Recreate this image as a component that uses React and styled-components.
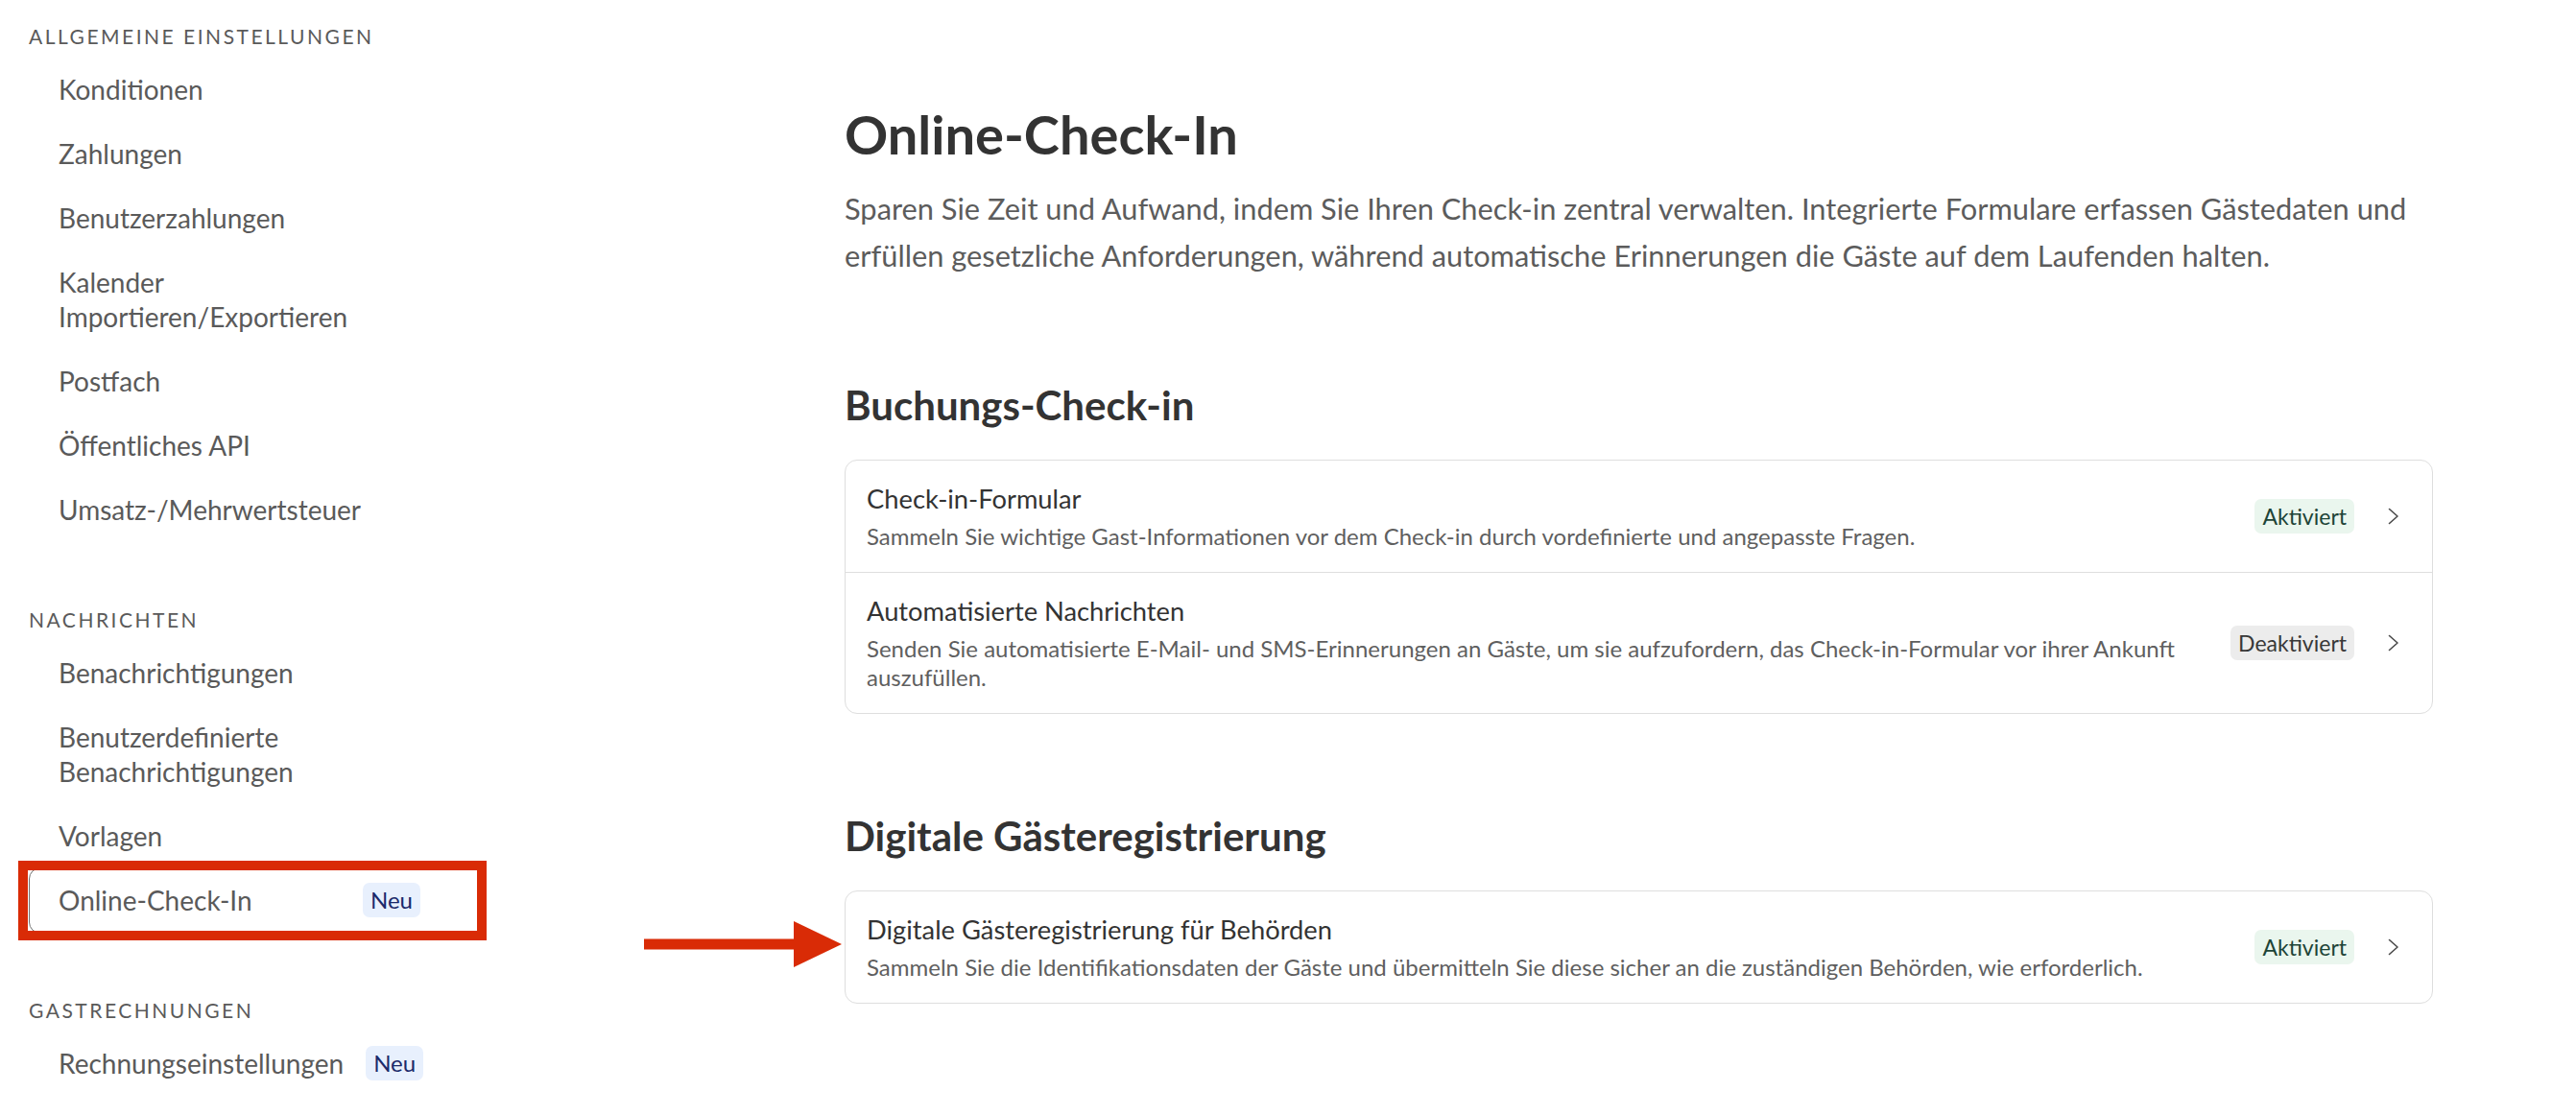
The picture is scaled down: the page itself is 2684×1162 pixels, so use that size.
import styled, { createGlobalStyle } from 'styled-components';

const GlobalStyle = createGlobalStyle`
  html, body {
    margin: 0;
    padding: 0;
    background: #ffffff;
  }
  body {
    font-family: Lato, "Liberation Sans", sans-serif;
    color: #333333;
  }
`;

const Page = styled.div`
  display: grid;
  grid-template-columns: 503px 1655px;
  column-gap: 377px;
  min-height: 1162px;
`;

const Sidebar = styled.nav`
  display: flex;
  flex-direction: column;
  gap: 63px;
  padding: 20px 0 0 30px;
`;

const Section = styled.div`
  display: flex;
  flex-direction: column;
`;

const SectionTitle = styled.div`
  font-size: 21px;
  line-height: 36px;
  height: 36px;
  letter-spacing: 2.5px;
  text-transform: uppercase;
  color: #5a5a5a;
  margin-bottom: 4px;
  white-space: nowrap;
`;

const NavItem = styled.div`
  position: relative;
  display: flex;
  align-items: flex-start;
  gap: 23px;
  padding: 15px 0 16px 30px;
  font-size: 28px;
  line-height: 36px;
  color: #5a5a5a;
  border: 1px solid ${p => (p.$active ? '#6e6e6e' : 'transparent')};
  border-radius: 12px;
  margin: -1px 0;
`;

const NavLabel = styled.span`
  min-width: ${p => (p.$badge ? '294px' : '0')};
`;

const NewBadge = styled.span`
  display: inline-block;
  height: 36px;
  line-height: 36px;
  padding: 0 8px;
  font-size: 24px;
  color: #1b2a6b;
  background: #e8f0fd;
  border-radius: 7px;
`;

const Highlight = styled.span`
  position: absolute;
  top: -8px;
  bottom: -8px;
  left: -12px;
  right: -5px;
  border: 10px solid #d92b06;
  pointer-events: none;
`;

const Main = styled.main`
  display: flex;
  flex-direction: column;
  padding-top: 106px;
`;

const PageTitle = styled.h1`
  margin: 0;
  font-size: 56px;
  line-height: 68px;
  font-weight: 700;
  color: #333333;
`;

const Lead = styled.p`
  margin: 19px 0 0;
  font-size: 30.8px;
  line-height: 49px;
  color: #5c5c5c;
`;

const GroupTitle = styled.h2`
  margin: 103px 0 0;
  font-size: 42px;
  line-height: 48px;
  font-weight: 700;
  color: #333333;
  &:first-of-type {
    margin-top: 107px;
  }
`;

const Card = styled.div`
  position: relative;
  margin-top: 33px;
  border: 1px solid #dedede;
  border-radius: 13px;
  background: #ffffff;
`;

const Row = styled.div`
  display: flex;
  align-items: center;
  gap: 26px;
  padding: 22px 34px 22px 22px;
  & + & {
    border-top: 1px solid #dedede;
  }
`;

const RowText = styled.div`
  flex: 1;
  display: flex;
  flex-direction: column;
  gap: 6px;
`;

const RowTitle = styled.div`
  font-size: 27.3px;
  line-height: 36px;
  color: #333333;
`;

const RowDesc = styled.div`
  font-size: 24px;
  line-height: 30px;
  color: #5f5f5f;
`;

const RowEnd = styled.div`
  display: flex;
  align-items: center;
  gap: 35px;
`;

const Status = styled.span`
  display: inline-block;
  height: 36px;
  line-height: 36px;
  padding: 0 8px;
  font-size: 23px;
  border-radius: 7px;
  color: ${p => (p.$on ? '#1d4437' : '#383838')};
  background: ${p => (p.$on ? '#eaf6ee' : '#ececec')};
`;

const Pointer = styled.svg`
  position: absolute;
  right: calc(100% + 4px);
  top: 50%;
  transform: translateY(calc(-50% - 3px));
`;

function Chevron() {
  return (
    <svg width="12" height="18" viewBox="0 0 12 18" fill="none">
      <polyline points="1.5,1.5 10,9 1.5,16.5" stroke="#4a4a4a" strokeWidth="1.6" strokeLinecap="round" strokeLinejoin="round" />
    </svg>
  );
}

const sections = [
  {
    title: 'Allgemeine Einstellungen',
    items: [
      { label: 'Konditionen' },
      { label: 'Zahlungen' },
      { label: 'Benutzerzahlungen' },
      { label: ['Kalender', 'Importieren/Exportieren'] },
      { label: 'Postfach' },
      { label: 'Öffentliches API' },
      { label: 'Umsatz-/Mehrwertsteuer' },
    ],
  },
  {
    title: 'Nachrichten',
    items: [
      { label: 'Benachrichtigungen' },
      { label: ['Benutzerdefinierte', 'Benachrichtigungen'] },
      { label: 'Vorlagen' },
      { label: 'Online-Check-In', badge: 'Neu', active: true },
    ],
  },
  {
    title: 'Gastrechnungen',
    items: [{ label: 'Rechnungseinstellungen', badge: 'Neu' }],
  },
];

const bookingRows = [
  {
    title: 'Check-in-Formular',
    desc: 'Sammeln Sie wichtige Gast-Informationen vor dem Check-in durch vordefinierte und angepasste Fragen.',
    on: true,
  },
  {
    title: 'Automatisierte Nachrichten',
    desc: 'Senden Sie automatisierte E-Mail- und SMS-Erinnerungen an Gäste, um sie aufzufordern, das Check-in-Formular vor ihrer Ankunft auszufüllen.',
    on: false,
  },
];

function SettingRow({ title, desc, on }) {
  return (
    <Row>
      <RowText>
        <RowTitle>{title}</RowTitle>
        <RowDesc>{desc}</RowDesc>
      </RowText>
      <RowEnd>
        <Status $on={on}>{on ? 'Aktiviert' : 'Deaktiviert'}</Status>
        <Chevron />
      </RowEnd>
    </Row>
  );
}

export default function App() {
  return (
    <>
      <GlobalStyle />
      <Page>
        <Sidebar>
          {sections.map(section => (
            <Section key={section.title}>
              <SectionTitle>{section.title}</SectionTitle>
              {section.items.map(item => {
                const key = Array.isArray(item.label) ? item.label.join(' ') : item.label;
                return (
                  <NavItem key={key} $active={item.active}>
                    <NavLabel $badge={!!item.badge}>
                      {Array.isArray(item.label)
                        ? item.label.map((l, i) => (
                            <span key={l}>
                              {i > 0 && <br />}
                              {l}
                            </span>
                          ))
                        : item.label}
                    </NavLabel>
                    {item.badge && <NewBadge>{item.badge}</NewBadge>}
                    {item.active && <Highlight />}
                  </NavItem>
                );
              })}
            </Section>
          ))}
        </Sidebar>

        <Main>
          <PageTitle>Online-Check-In</PageTitle>
          <Lead>
            Sparen Sie Zeit und Aufwand, indem Sie Ihren Check-in zentral verwalten. Integrierte Formulare erfassen Gästedaten und erfüllen gesetzliche Anforderungen, während automatische Erinnerungen die Gäste auf dem Laufenden halten.
          </Lead>

          <GroupTitle>Buchungs-Check-in</GroupTitle>
          <Card>
            {bookingRows.map(r => (
              <SettingRow key={r.title} {...r} />
            ))}
          </Card>

          <GroupTitle>Digitale Gästeregistrierung</GroupTitle>
          <Card>
            <SettingRow
              title="Digitale Gästeregistrierung für Behörden"
              desc="Sammeln Sie die Identifikationsdaten der Gäste und übermitteln Sie diese sicher an die zuständigen Behörden, wie erforderlich."
              on
            />
            <Pointer width="206" height="48" viewBox="0 0 206 48">
              <rect x="0" y="18.5" width="157" height="11" fill="#d92b06" />
              <polygon points="156,0 206,24 156,48" fill="#d92b06" />
            </Pointer>
          </Card>
        </Main>
      </Page>
    </>
  );
}
